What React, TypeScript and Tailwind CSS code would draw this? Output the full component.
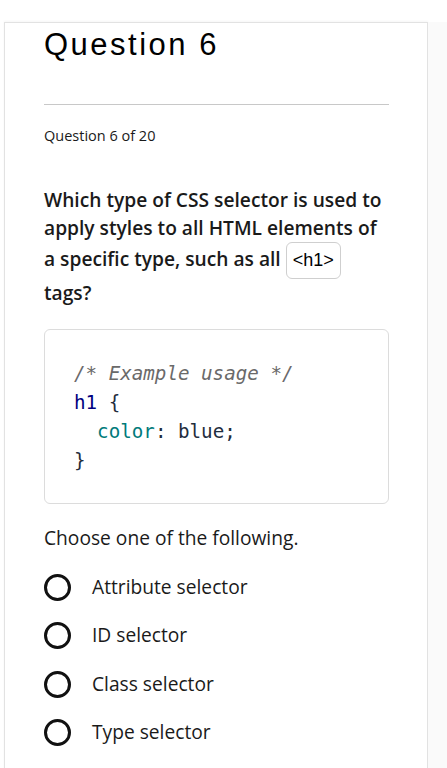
import React from 'react';

const OPTIONS = ['Attribute selector', 'ID selector', 'Class selector', 'Type selector'];

export default function App() {
  return (
    <div className="min-h-screen bg-white pt-[22px] flex" style={{ fontFamily: '"Open Sans", sans-serif' }}>
      <div className="w-[4px] shrink-0 bg-white" />
      <div className="w-[424px] shrink-0 bg-white border-l border-r border-t border-[#e2e2e2] shadow-[0_-1px_2px_rgba(0,0,0,0.04)] pl-[39px] pr-[38px] pb-10">
        <h1 className="text-[31px] leading-[36px] pt-[4px] tracking-[2.5px] text-black font-['Liberation_Sans',Arial,sans-serif]">
          Question 6
        </h1>
        <div className="mt-[41px] border-t border-[#c8c8c8]" />
        <p className="mt-[21px] text-[14.5px] leading-[20px] text-[#1a1a1a]">Question 6 of 20</p>

        <p className="mt-[40px] text-[19.2px] leading-[28px] font-semibold text-[#1a1a1a]">
          Which type of CSS selector is used to apply styles to all HTML elements of a specific type, such as all{' '}
          <code className="inline-block align-middle px-[6px] h-[37px] leading-[35px] border border-[#cfcfcf] rounded-[6px] text-[18px] font-normal font-['Liberation_Sans',Arial,sans-serif] text-black">
            &lt;h1&gt;
          </code>{' '}
          tags?
        </p>

        <pre className="mt-[22px] border border-[#dcdcdc] rounded-[6px] pt-[29px] pb-[28px] pl-[29px] text-[19.2px] leading-[29px] font-['DejaVu_Sans_Mono',monospace] text-[#1f2d3d]">
          <span className="italic text-[#6a6a6a]">/* Example usage */</span>
          {'\n'}
          <span className="text-[#00007f]">h1</span> {'{'}
          {'\n'}
          {'  '}
          <span className="text-[#007a7a]">color</span>: blue;
          {'\n'}
          {'}'}
        </pre>

        <p className="mt-[20px] text-[19.2px] leading-[28px] text-[#1a1a1a]">Choose one of the following.</p>

        <div className="mt-[11px] flex flex-col">
          {OPTIONS.map((o) => (
            <label key={o} className="flex items-center h-[48.5px] gap-[21px] cursor-pointer">
              <span className="w-[27px] h-[27px] rounded-full border-[3px] border-[#111] shrink-0" />
              <span className="text-[19.2px] text-[#1a1a1a]">{o}</span>
            </label>
          ))}
        </div>
      </div>
      <div className="flex-1 bg-[#fafafa]" />
    </div>
  );
}
